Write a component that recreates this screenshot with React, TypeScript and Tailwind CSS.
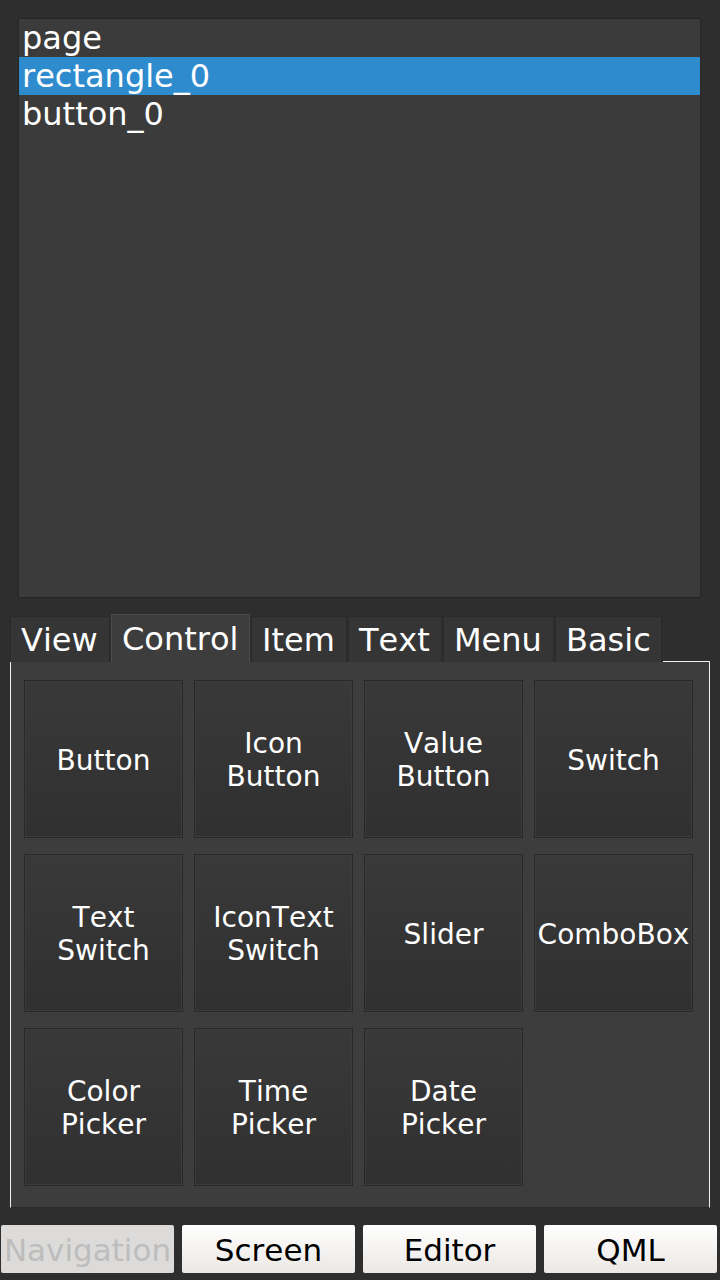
const items = ['page', 'rectangle_0', 'button_0']

const tabs = [
  { label: 'View', w: 'w-[100px]' },
  { label: 'Control', w: 'w-[139px]' },
  { label: 'Item', w: 'w-[96px]' },
  { label: 'Text', w: 'w-[94px]' },
  { label: 'Menu', w: 'w-[111px]' },
  { label: 'Basic', w: 'w-[107px]' },
]

const controls = [
  ['Button'],
  ['Icon', 'Button'],
  ['Value', 'Button'],
  ['Switch'],
  ['Text', 'Switch'],
  ['IconText', 'Switch'],
  ['Slider'],
  ['ComboBox'],
  ['Color', 'Picker'],
  ['Time', 'Picker'],
  ['Date', 'Picker'],
]

const bottom = ['Navigation', 'Screen', 'Editor', 'QML']

export default function App() {
  return (
    <div
      className="w-[720px] h-[1280px] bg-[#2e2e2e] flex flex-col overflow-hidden [font-kerning:none]"
      style={{ fontFamily: '"DejaVu Sans", sans-serif' }}
    >
      {/* object list */}
      <div className="ml-[18px] mr-[19px] mt-[18px] h-[580px] bg-[#3b3b3b] border border-[#262626] flex flex-col">
        {items.map((it, i) => (
          <div
            key={it}
            className={
              'h-[38px] pl-[3px] text-[32px] leading-[38px] text-white ' +
              (i === 1 ? 'bg-[#2e8bcd]' : '')
            }
          >
            {it}
          </div>
        ))}
      </div>

      {/* tab bar */}
      <div className="mt-[16px] ml-[10px] mr-[10px] flex items-end h-[48px]">
        {tabs.map((t, i) => (
          <div
            key={t.label}
            className={
              t.w +
              ' mr-[1px] border border-b-0 text-white text-[32px] flex items-center pl-[10px] ' +
              (i === 1
                ? 'h-[48px] bg-[#3d3d3d] border-[#4a4a4a]'
                : 'h-[46px] bg-[#353535] border-[#2a2a2a]')
            }
          >
            {t.label}
          </div>
        ))}
        <div className="flex-1 h-full border-b border-[#f0f0f0]" />
      </div>

      {/* tab content */}
      <div className="ml-[10px] mr-[10px] h-[546px] bg-[#3d3d3d] border-l border-r border-b border-l-[#f0f0f0] border-r-[#f0f0f0] border-b-[#2a2a2a] pt-[18px] pl-[13px]">
        <div className="grid grid-cols-[159px_159px_159px_159px] gap-x-[11px] gap-y-[16px]">
          {controls.map((c) => (
            <div
              key={c.join(' ')}
              className="h-[158px] pt-[2px] border border-[#282828] bg-gradient-to-b from-[#393939] to-[#303030] shadow-[inset_0_0_0_1px_#3c3c3c] flex flex-col items-center justify-center text-white text-[28px] leading-[33px] text-center whitespace-nowrap"
            >
              {c.map((l) => (
                <span key={l}>{l}</span>
              ))}
            </div>
          ))}
        </div>
      </div>

      {/* bottom buttons */}
      <div className="mt-[17px] ml-[1px] mr-[3px] flex gap-[8px]">
        {bottom.map((b, i) => (
          <div
            key={b}
            className={
              'w-[173px] h-[48px] pt-[2px] rounded-[2px] flex items-center justify-center overflow-hidden whitespace-nowrap text-[31px] ' +
              (i === 0
                ? 'bg-[#dcdbd9] text-[#bdbdbd]'
                : 'bg-gradient-to-b from-[#ffffff] to-[#ebe8e5] text-black')
            }
          >
            {b}
          </div>
        ))}
      </div>
    </div>
  )
}
